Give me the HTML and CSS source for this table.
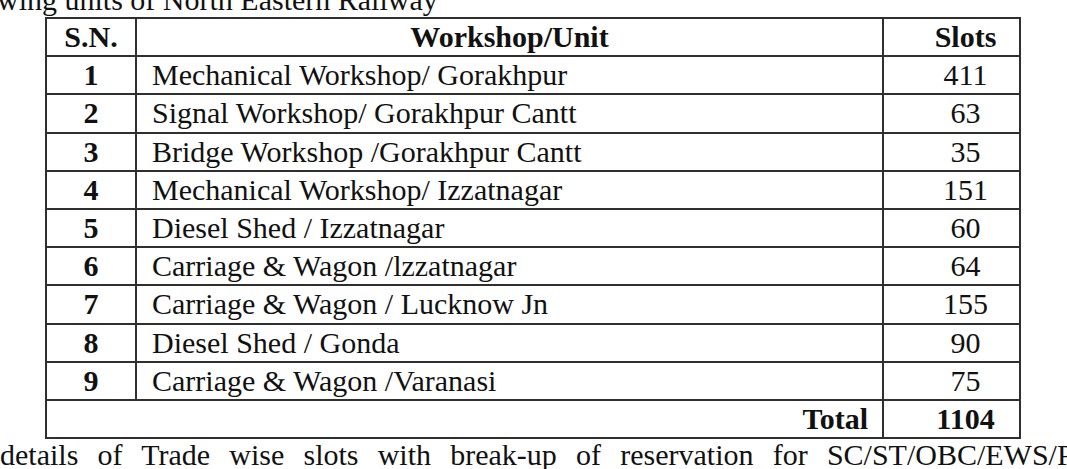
FILE: index.html
```html
<!DOCTYPE html>
<html>
<head>
<meta charset="utf-8">
<link rel="stylesheet" href="styles.css">
</head>
<body>
<div class="page">
  <p class="lead">wing units of North Eastern Railway</p>
  <table class="units">
    <thead>
      <tr><th class="sn">S.N.</th><th class="unit">Workshop/Unit</th><th class="slots">Slots</th></tr>
    </thead>
    <tbody>
      <tr><td class="sn">1</td><td class="unit">Mechanical Workshop/ Gorakhpur</td><td class="slots">411</td></tr>
      <tr><td class="sn">2</td><td class="unit">Signal Workshop/ Gorakhpur Cantt</td><td class="slots">63</td></tr>
      <tr><td class="sn">3</td><td class="unit">Bridge Workshop /Gorakhpur Cantt</td><td class="slots">35</td></tr>
      <tr><td class="sn">4</td><td class="unit">Mechanical Workshop/ Izzatnagar</td><td class="slots">151</td></tr>
      <tr><td class="sn">5</td><td class="unit">Diesel Shed / Izzatnagar</td><td class="slots">60</td></tr>
      <tr><td class="sn">6</td><td class="unit">Carriage &amp; Wagon /lzzatnagar</td><td class="slots">64</td></tr>
      <tr><td class="sn">7</td><td class="unit">Carriage &amp; Wagon / Lucknow Jn</td><td class="slots">155</td></tr>
      <tr><td class="sn">8</td><td class="unit">Diesel Shed / Gonda</td><td class="slots">90</td></tr>
      <tr><td class="sn">9</td><td class="unit">Carriage &amp; Wagon /Varanasi</td><td class="slots">75</td></tr>
      <tr class="total"><td class="total-label" colspan="2">Total</td><td class="slots">1104</td></tr>
    </tbody>
  </table>
  <p class="tail">details of Trade wise slots with break-up of reservation for SC/ST/OBC/EWS/PwBD/ExSM</p>
</div>
</body>
</html>
```
FILE: styles.css
```css
html, body {
  margin: 0;
  padding: 0;
  background: #fff;
  overflow: hidden;
}
.page {
  width: 1067px;
  height: 469px;
  overflow: hidden;
  font-family: "Liberation Serif", "Times New Roman", serif;
  color: #111;
  font-size: 30px;
}
.lead {
  margin: -16px 0 0 -3px;
  line-height: 32px;
  height: 33px;
  white-space: nowrap;
}
.units {
  border-collapse: collapse;
  margin: 0 0 0 45px;
  width: 976px;
  table-layout: fixed;
}
.units th, .units td {
  border: 2px solid #2f2f2f;
  height: 36.2px;
  padding: 0;
  line-height: 36px;
  vertical-align: middle;
}
.units th {
  font-weight: bold;
  text-align: center;
}
.units th.sn { width: 88px; }
.units th.slots { width: 107px; }
td.sn {
  font-weight: bold;
  text-align: center;
}
td.unit {
  padding-left: 15px;
  text-align: left;
}
.units .slots {
  text-align: center;
  padding-left: 28px;
}
.total td {
  font-weight: bold;
}
.units .total-label {
  text-align: right;
  padding-right: 14px;
}
.tail {
  margin: 0;
  width: 1222px;
  text-align: justify;
  text-align-last: justify;
  white-space: nowrap;
  line-height: 32px;
}
```
